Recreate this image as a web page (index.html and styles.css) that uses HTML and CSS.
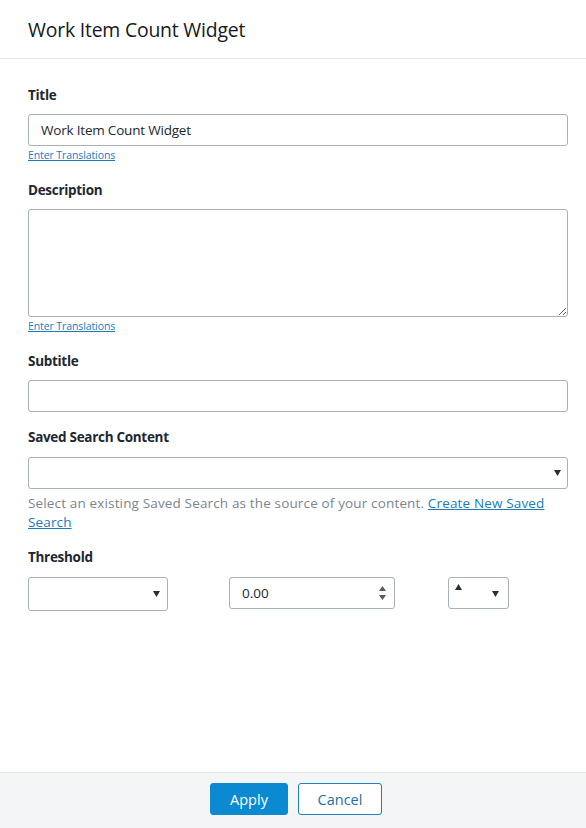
FILE: index.html
```html
<!DOCTYPE html>
<html>
<head>
<meta charset="utf-8">
<link rel="stylesheet" href="styles.css">
</head>
<body>
<div class="dialog">
  <header class="dialog-header">
    <h1 class="dialog-title">Work Item Count Widget</h1>
  </header>
  <main class="dialog-body">
    <div class="field field-link">
      <label class="field-label">Title</label>
      <input class="text-input" type="text" value="Work Item Count Widget">
      <a class="translate-link" href="#">Enter Translations</a>
    </div>
    <div class="field field-link">
      <label class="field-label">Description</label>
      <textarea class="text-area"></textarea>
      <a class="translate-link" href="#">Enter Translations</a>
    </div>
    <div class="field">
      <label class="field-label">Subtitle</label>
      <input class="text-input" type="text" value="">
    </div>
    <div class="field">
      <label class="field-label">Saved Search Content</label>
      <div class="select-box select-wide">
        <svg class="caret" width="7" height="6" viewBox="0 0 7 6"><path d="M0 0H7L3.5 6Z"/></svg>
      </div>
      <p class="help-text">Select an existing Saved Search as the source of your content. <a class="help-link" href="#">Create New Saved Search</a></p>
    </div>
    <div class="field">
      <label class="field-label">Threshold</label>
      <div class="threshold-row">
        <div class="select-box select-op">
          <svg class="caret" width="7" height="6" viewBox="0 0 7 6"><path d="M0 0H7L3.5 6Z"/></svg>
        </div>
        <div class="number-box">
          <span class="number-value">0.00</span>
          <span class="spinner">
            <svg width="7" height="5" viewBox="0 0 7 5"><path d="M3.5 0L7 5H0Z"/></svg>
            <svg width="7" height="5" viewBox="0 0 7 5"><path d="M0 0H7L3.5 5Z"/></svg>
          </span>
        </div>
        <div class="select-box select-dir">
          <svg class="dir-up" width="7" height="6" viewBox="0 0 7 6"><path d="M3.5 0L7 6H0Z"/></svg>
          <svg class="caret" width="7" height="6" viewBox="0 0 7 6"><path d="M0 0H7L3.5 6Z"/></svg>
        </div>
      </div>
    </div>
  </main>
  <footer class="dialog-footer">
    <button class="btn btn-primary">Apply</button>
    <button class="btn btn-secondary">Cancel</button>
  </footer>
</div>
</body>
</html>
```
FILE: styles.css
```css
* { box-sizing: border-box; }
html, body { margin: 0; padding: 0; }
body {
  font-family: "Open Sans", "Noto Sans", sans-serif;
  color: #1d2730;
  background: #ffffff;
}
.dialog {
  width: 586px;
  height: 828px;
  display: flex;
  flex-direction: column;
}
.dialog-header {
  height: 59px;
  border-bottom: 1px solid #e4e6e8;
  padding: 0 28px;
  display: flex;
  align-items: center;
}
.dialog-title {
  margin: 0;
  font-size: 19.4px;
  font-weight: 400;
  color: #141a20;
  letter-spacing: -0.2px;
}
.dialog-body {
  flex: 1;
  padding: 26px 18px 0 28px;
}
.field { margin-bottom: 15px; }
.field-link { margin-bottom: 18px; }
.field-label {
  display: block;
  font-size: 13.5px;
  font-weight: 700;
  line-height: 20px;
  margin-bottom: 9px;
  color: #1d2730;
  letter-spacing: -0.3px;
}
.text-input, .text-area {
  display: block;
  width: 540px;
  height: 32px;
  border: 1px solid #a9b0b6;
  border-radius: 3px;
  font-family: "Open Sans", "Noto Sans", sans-serif;
  font-size: 13.5px;
  color: #1d2730;
  padding: 0 12px;
  outline: none;
  letter-spacing: -0.2px;
}
.text-area {
  height: 108px;
  resize: both;
}
.translate-link {
  display: block;
  margin-top: 2px;
  font-size: 10.5px;
  line-height: 14px;
  color: #1b7bbd;
  text-decoration: underline;
  letter-spacing: -0.1px;
}
.select-box {
  position: relative;
  height: 32px;
  border: 1px solid #a9b0b6;
  border-radius: 3px;
  background: #fff;
}
.select-wide { width: 540px; margin-top: 10px; }
.caret {
  position: absolute;
  right: 6px;
  top: 12px;
  fill: #2a2f33;
}
.select-wide .caret { right: 6px; top: 12px; }
.help-text {
  margin: 5px 0 0;
  font-size: 13.5px;
  line-height: 19px;
  color: #7b868d;
  letter-spacing: 0.15px;
}
.help-link { color: #1b7bbd; text-decoration: underline; }
.threshold-row {
  display: flex;
  align-items: flex-start;
  margin-top: 10px;
}
.select-op { width: 140px; height: 34px; }
.select-op .caret { right: 7px; top: 13px; }
.number-box {
  margin-left: 61px;
  width: 166px;
  height: 32px;
  border: 1px solid #a9b0b6;
  border-radius: 3px;
  display: flex;
  align-items: center;
  justify-content: space-between;
  padding: 0 8px 0 12px;
}
.number-value {
  font-size: 13.5px;
  color: #1d2730;
}
.spinner {
  display: flex;
  flex-direction: column;
  gap: 4px;
  fill: #555b60;
}
.spinner svg { display: block; }
.select-dir {
  margin-left: 53px;
  width: 61px;
}
.dir-up {
  position: absolute;
  left: 6px;
  top: 6px;
  fill: #2a2f33;
}
.select-dir .caret { right: 9px; top: 13px; }
.dialog-footer {
  height: 56px;
  background: #f4f5f7;
  border-top: 1px solid #e1e5e8;
  display: flex;
  justify-content: center;
  align-items: flex-start;
  padding-top: 10px;
  padding-left: 6px;
  gap: 10px;
}
.btn {
  height: 32px;
  border-radius: 3px;
  font-family: "Open Sans", "Noto Sans", sans-serif;
  font-size: 14.5px;
  padding: 0;
  cursor: pointer;
}
.btn-primary {
  width: 78px;
  background: #0b8ad1;
  border: 1px solid #0b8ad1;
  color: #ffffff;
}
.btn-secondary {
  width: 84px;
  background: #ffffff;
  border: 1px solid #1f7fc0;
  color: #1f6fa8;
}
```
